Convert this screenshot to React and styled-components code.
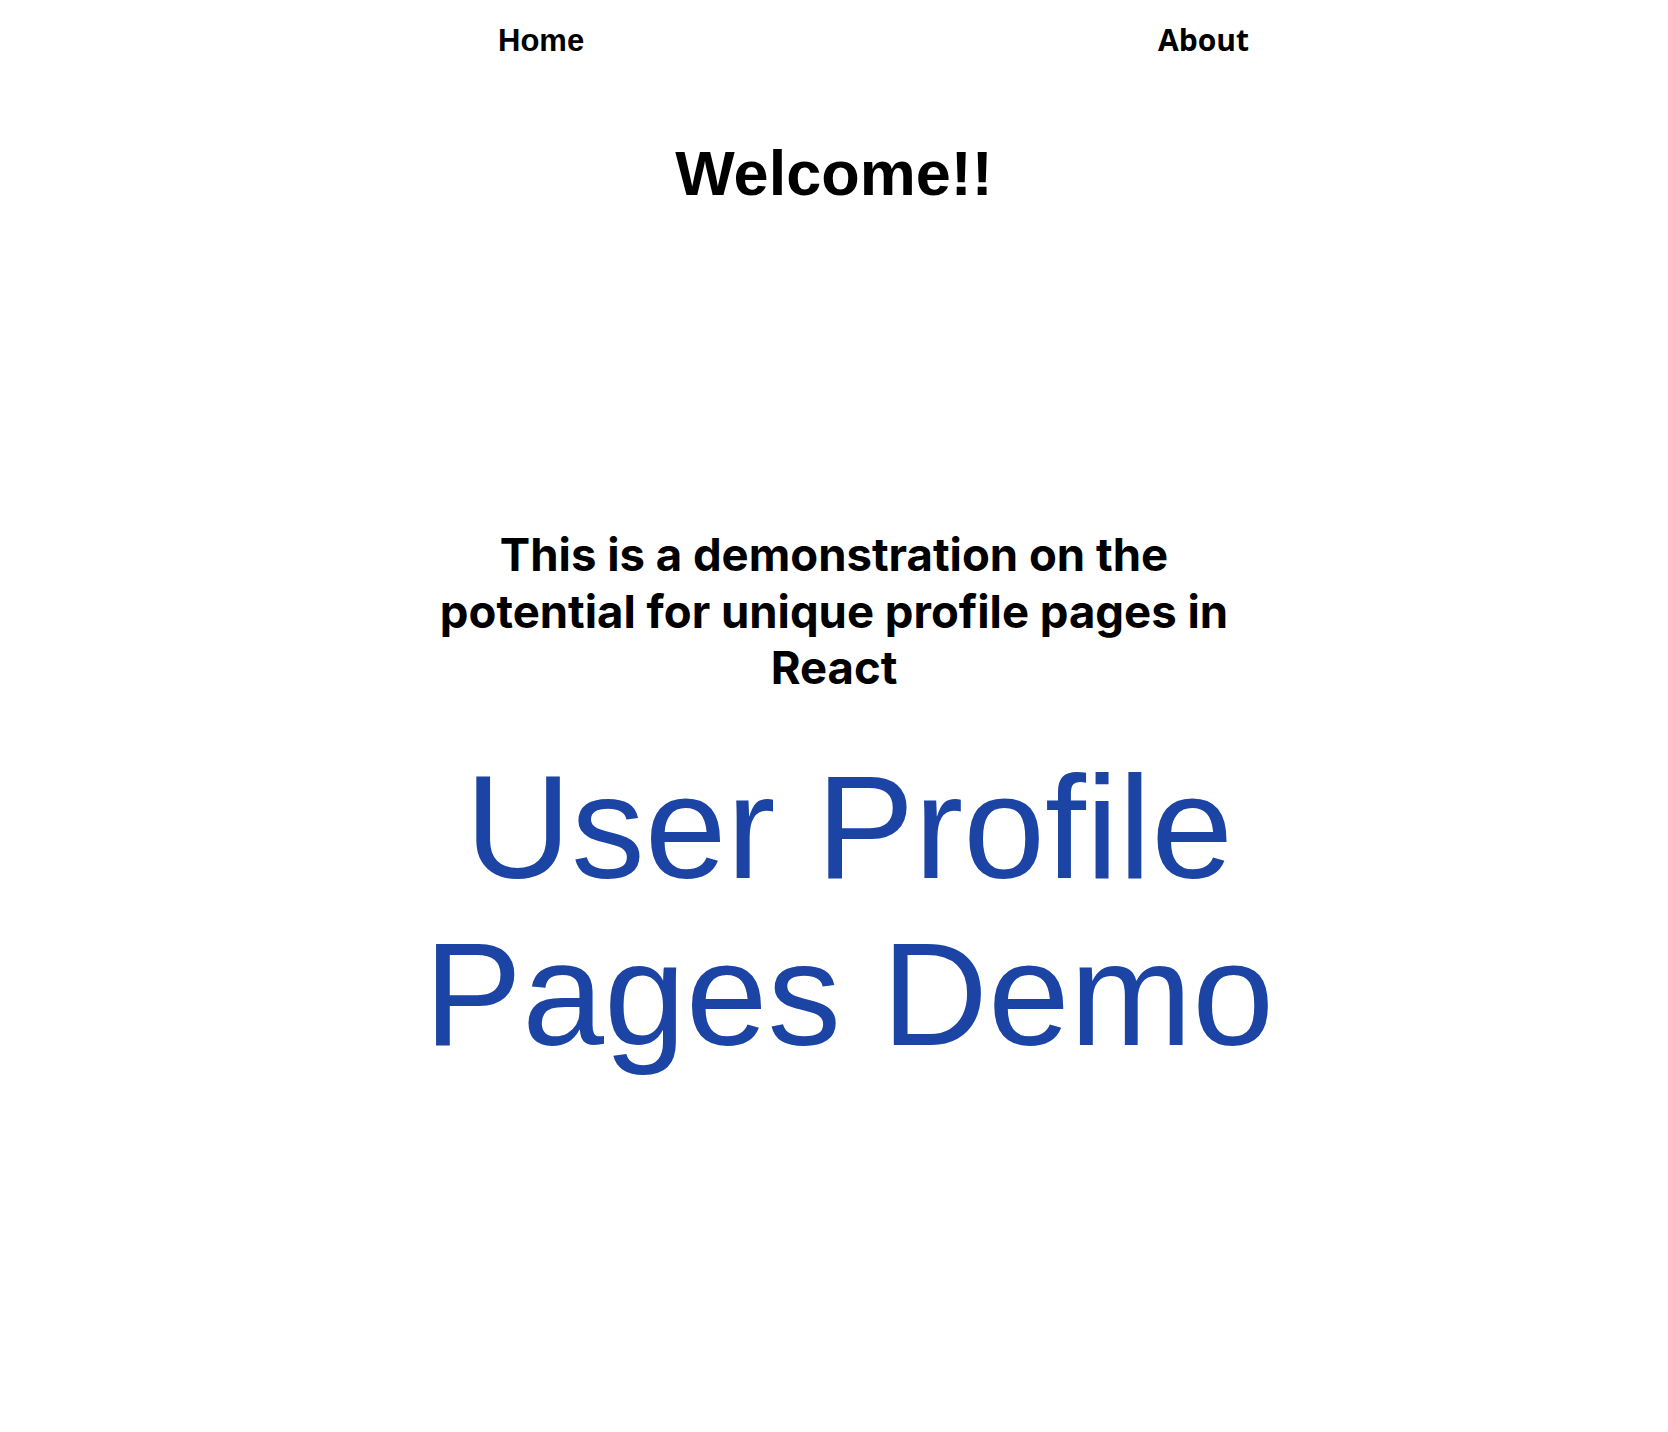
import React from 'react'
import styled, { createGlobalStyle } from 'styled-components'

const GlobalStyle = createGlobalStyle`
  body {
    margin: 0;
    background: #ffffff;
    color: #000000;
    font-family: "Liberation Sans", Arial, sans-serif;
  }
`

const links = [
  { label: 'Home', href: '#home', font: '"Liberation Sans", Arial, sans-serif', size: 31 },
  { label: 'About', href: '#about', font: '"Open Sans", "Noto Sans", sans-serif', size: 30 },
]

function App() {
  return (
    <PageContainer>
      <GlobalStyle />
      <NavBar>
        {links.map(link => (
          <NavLink key={link.label} href={link.href} $font={link.font} $size={link.size}>
            {link.label}
          </NavLink>
        ))}
      </NavBar>

      <Content>
        <Title>Welcome!!</Title>
        <Intro>
          This is a demonstration on the potential for unique profile pages in React
        </Intro>
        <Banner>User Profile Pages Demo</Banner>
      </Content>
    </PageContainer>
  )
}

const PageContainer = styled.div`
  min-height: 1432px;
  display: flex;
  flex-direction: column;
`

const NavBar = styled.nav`
  display: flex;
  align-items: baseline;
  justify-content: space-between;
  width: 834px;
  box-sizing: border-box;
  margin: 19px auto 0;
  padding: 0 2px 0 81px;
`

const NavLink = styled.a`
  font-family: ${props => props.$font};
  font-size: ${props => props.$size}px;
  font-weight: 700;
  color: #000000;
  text-decoration: none;

  &:hover {
    text-decoration: underline;
  }
`

const Content = styled.main`
  display: flex;
  flex-direction: column;
  align-items: center;
  text-align: center;
`

const Title = styled.h1`
  margin: 77px 0 0;
  font-family: "Liberation Sans", Arial, sans-serif;
  font-size: 63px;
  font-weight: 700;
`

const Intro = styled.h2`
  max-width: 834px;
  margin: 318px 0 0;
  font-family: Inter, "Noto Sans", sans-serif;
  font-size: 45.5px;
  line-height: 56.5px;
  font-weight: 700;
`

const Banner = styled.h1`
  max-width: 900px;
  margin: 47px 0 0;
  padding-left: 30px;
  font-family: "Liberation Sans", Arial, sans-serif;
  font-size: 147px;
  line-height: 167px;
  font-weight: 400;
  color: #1b44a5;
`

export default App
